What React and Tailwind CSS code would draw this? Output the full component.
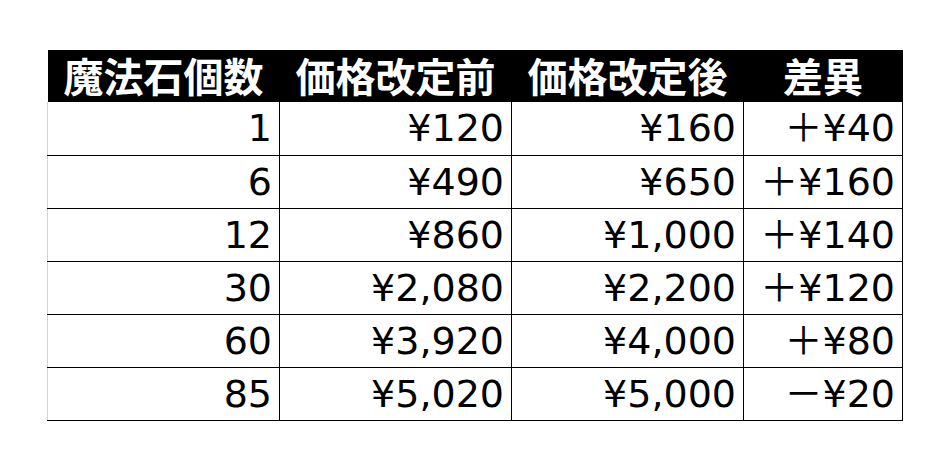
const header = ['魔法石個数', '価格改定前', '価格改定後', '差異'];

const rows = [
  ['1', '¥120', '¥160', '＋¥40'],
  ['6', '¥490', '¥650', '＋¥160'],
  ['12', '¥860', '¥1,000', '＋¥140'],
  ['30', '¥2,080', '¥2,200', '＋¥120'],
  ['60', '¥3,920', '¥4,000', '＋¥80'],
  ['85', '¥5,020', '¥5,000', '－¥20'],
];

const widths = ['w-[232px]', 'w-[232px]', 'w-[232px]', 'w-[159px]'];

export default function App() {
  return (
    <div className="w-[950px] h-[470px] bg-white pt-[50px] pl-[47px]">
      <table
        className="border-collapse table-fixed text-[38px] leading-none text-black"
        style={{ fontFamily: '"DejaVu Sans", "Noto Sans CJK JP", sans-serif' }}
      >
        <thead>
          <tr className="h-[52px] bg-black">
            {header.map((h, i) => (
              <th
                key={h}
                className={`${widths[i]} p-0 pb-[3px] text-center text-[40px] font-bold text-white`}
                style={{ fontFamily: '"Noto Sans CJK JP", sans-serif' }}
              >
                {h}
              </th>
            ))}
          </tr>
        </thead>
        <tbody>
          {rows.map((r) => (
            <tr key={r[0]} className="h-[53px]">
              {r.map((c, i) => (
                <td
                  key={i}
                  className={`${widths[i]} p-0 pr-[7px] text-right border-b border-black ${
                    i === 0 ? 'border-l border-l-[#d4d4d4]' : 'border-l border-l-black'
                  } ${i === 3 ? 'border-r border-r-black' : ''}`}
                >
                  {c}
                </td>
              ))}
            </tr>
          ))}
        </tbody>
      </table>
    </div>
  );
}
